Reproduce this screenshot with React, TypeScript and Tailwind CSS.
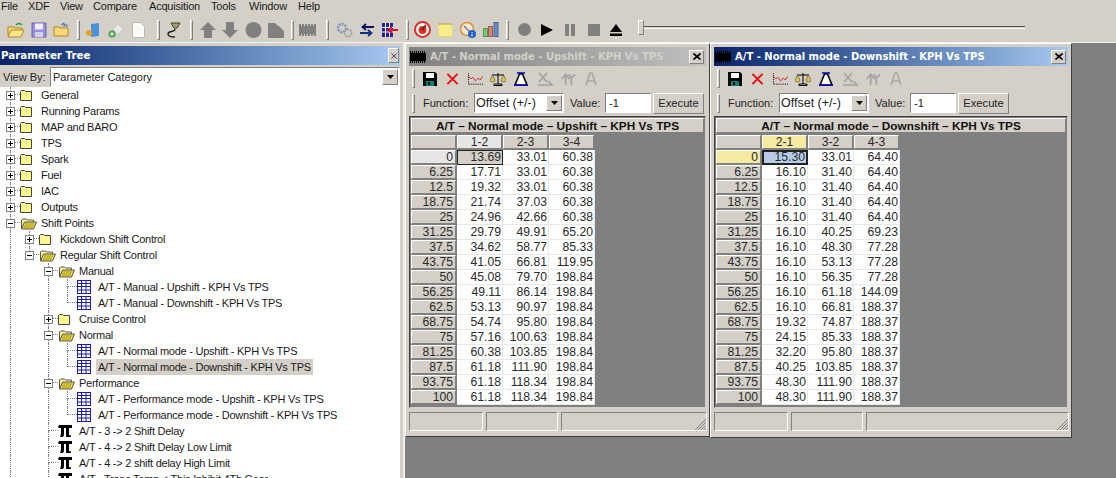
const UI = "font-['Liberation_Sans',sans-serif] text-[11px]";
const RAISED = 'border border-t-white border-l-white border-r-[#808080] border-b-[#808080]';
const SUNKEN = 'border border-t-[#808080] border-l-[#808080] border-r-white border-b-white';

type TreeItem = {
  label: string;
  guides: boolean[];
  icon: 'closed' | 'open' | 'table' | 'pi';
  box?: 'plus' | 'minus';
  last?: boolean;
  selected?: boolean;
};

const top = (label: string): TreeItem => ({ label, guides: [], icon: 'closed', box: 'plus' });

const treeItems: TreeItem[] = [
  top('General'),
  top('Running Params'),
  top('MAP and BARO'),
  top('TPS'),
  top('Spark'),
  top('Fuel'),
  top('IAC'),
  top('Outputs'),
  { label: 'Shift Points', guides: [], icon: 'open', box: 'minus' },
  { label: 'Kickdown Shift Control', guides: [true], icon: 'closed', box: 'plus' },
  { label: 'Regular Shift Control', guides: [true], icon: 'open', box: 'minus', last: true },
  { label: 'Manual', guides: [true, false], icon: 'open', box: 'minus' },
  { label: 'A/T - Manual - Upshift - KPH Vs TPS', guides: [true, false, true], icon: 'table' },
  { label: 'A/T - Manual - Downshift - KPH Vs TPS', guides: [true, false, true], icon: 'table', last: true },
  { label: 'Cruise Control', guides: [true, false], icon: 'closed', box: 'plus' },
  { label: 'Normal', guides: [true, false], icon: 'open', box: 'minus' },
  { label: 'A/T - Normal mode - Upshift - KPH Vs TPS', guides: [true, false, true], icon: 'table' },
  { label: 'A/T - Normal mode - Downshift - KPH Vs TPS', guides: [true, false, true], icon: 'table', last: true, selected: true },
  { label: 'Performance', guides: [true, false], icon: 'open', box: 'minus' },
  { label: 'A/T - Performance mode - Upshift - KPH Vs TPS', guides: [true, false, true], icon: 'table' },
  { label: 'A/T - Performance mode - Downshift - KPH Vs TPS', guides: [true, false, true], icon: 'table', last: true },
  { label: 'A/T - 3 -> 2 Shift Delay', guides: [true, false], icon: 'pi' },
  { label: 'A/T - 4 -> 2 Shift Delay Low Limit', guides: [true, false], icon: 'pi' },
  { label: 'A/T - 4 -> 2 shift delay High Limit', guides: [true, false], icon: 'pi' },
  { label: 'A/T - Trans Temp < This Inhibit 4Th Gear', guides: [true, false], icon: 'pi' },
];

const labels = ['0', '6.25', '12.5', '18.75', '25', '31.25', '37.5', '43.75', '50', '56.25', '62.5', '68.75', '75', '81.25', '87.5', '93.75', '100'];

const upshift = {
  title: 'A/T - Normal mode - Upshift - KPH Vs TPS',
  heading: 'A/T – Normal mode – Upshift – KPH Vs TPS',
  cols: ['1-2', '2-3', '3-4'],
  rows: [
    ['13.69', '33.01', '60.38'], ['17.71', '33.01', '60.38'], ['19.32', '33.01', '60.38'], ['21.74', '37.03', '60.38'],
    ['24.96', '42.66', '60.38'], ['29.79', '49.91', '65.20'], ['34.62', '58.77', '85.33'], ['41.05', '66.81', '119.95'],
    ['45.08', '79.70', '198.84'], ['49.11', '86.14', '198.84'], ['53.13', '90.97', '198.84'], ['54.74', '95.80', '198.84'],
    ['57.16', '100.63', '198.84'], ['60.38', '103.85', '198.84'], ['61.18', '111.90', '198.84'], ['61.18', '118.34', '198.84'],
    ['61.18', '118.34', '198.84'],
  ],
};

const downshift = {
  title: 'A/T - Normal mode - Downshift - KPH Vs TPS',
  heading: 'A/T – Normal mode – Downshift – KPH Vs TPS',
  cols: ['2-1', '3-2', '4-3'],
  rows: [
    ['15.30', '33.01', '64.40'], ['16.10', '31.40', '64.40'], ['16.10', '31.40', '64.40'], ['16.10', '31.40', '64.40'],
    ['16.10', '31.40', '64.40'], ['16.10', '40.25', '69.23'], ['16.10', '48.30', '77.28'], ['16.10', '53.13', '77.28'],
    ['16.10', '56.35', '77.28'], ['16.10', '61.18', '144.09'], ['16.10', '66.81', '188.37'], ['19.32', '74.87', '188.37'],
    ['24.15', '85.33', '188.37'], ['32.20', '95.80', '188.37'], ['40.25', '103.85', '188.37'], ['48.30', '111.90', '188.37'],
    ['48.30', '111.90', '188.37'],
  ],
};

function Folder({ open }: { open: boolean }) {
  if (open) {
    return (
      <svg viewBox="0 0 18 13" className="w-[18px] h-[13px]">
        <path d="M1.500 12V3l1-1h4l1 1h6v2" fill="#fbf59b" stroke="#555" />
        <path d="M1.500 12l3-7h12l-3 7z" fill="#e8d84a" stroke="#555" />
        <path d="M5 7h9M4 9h9M3.500 11h9" stroke="#a89a20" />
      </svg>
    );
  }
  return (
    <svg viewBox="0 0 12 11" className="w-[12px] h-[11px]">
      <path d="M.5 10.500V1.500l1-1h3l1 1h6v9z" fill="#fbf68f" stroke="#444" />
    </svg>
  );
}

function TableIcon() {
  return (
    <svg viewBox="0 0 14 14" className="w-[14px] h-[14px]">
      <rect x="0.500" y="0.500" width="13" height="13" fill="#fff" stroke="#1c1ca8" />
      <path d="M.5 3.500h13M.5 6.500h13M.5 10h13M4.500 .5v13M9 .5v13" stroke="#1c1ca8" />
    </svg>
  );
}

function PiIcon() {
  return (
    <svg viewBox="0 0 14 14" className="w-[14px] h-[14px]">
      <path d="M0 3l1-2h13v3h-3v7l2 .5V13H8V4H6v7l-1 2H2l1-3V4H1z" fill="#000" />
    </svg>
  );
}

function TreeRow({ item }: { item: TreeItem }) {
  return (
    <div className="flex h-[16px] items-center pl-[1px]">
      {item.guides.map((on, i) => (
        <div key={i} className="w-[19px] h-full shrink-0">
          {on && <div className="ml-[9px] h-full border-l border-dotted border-[#808080]" />}
        </div>
      ))}
      <div className="relative w-[19px] h-full shrink-0">
        <div className="ml-[9px] w-[10px] h-[8px] border-l border-b border-dotted border-[#808080]" />
        {!item.last && <div className="ml-[9px] h-[8px] border-l border-dotted border-[#808080]" />}
        {item.box && (
          <div className="absolute left-[5px] top-[4px] w-[9px] h-[9px] border border-[#808080] bg-white flex items-center justify-center">
            <div className="w-[5px] h-px bg-black" />
            {item.box === 'plus' && <div className="absolute w-px h-[5px] bg-black" />}
          </div>
        )}
      </div>
      <div className="w-[20px] shrink-0 flex items-center justify-start">
        {item.icon === 'closed' && <Folder open={false} />}
        {item.icon === 'open' && <Folder open />}
        {item.icon === 'table' && <TableIcon />}
        {item.icon === 'pi' && <PiIcon />}
      </div>
      <span className={`whitespace-nowrap -ml-[1px] px-[2px] leading-[16px] tracking-[-0.25px] text-[#1a1a1a] ${item.selected ? 'bg-[#d4d0c8]' : ''}`}>
        {item.label}
      </span>
    </div>
  );
}

function ComboArrow() {
  return (
    <div className={`w-[16px] h-[16px] bg-[#d4d0c8] flex items-center justify-center ${RAISED}`}>
      <svg viewBox="0 0 7 4" className="w-[7px] h-[4px]">
        <path d="M0 0h7L3.500 4z" fill="#000" />
      </svg>
    </div>
  );
}

function Grip() {
  return <div className={`w-[3px] h-[19px] ${RAISED}`} />;
}

// little icon strip shared by both table windows
function WindowTools() {
  return (
    <div className="flex items-center h-[25px] pl-[3px]">
      <Grip />
      <svg viewBox="0 0 14 14" className="w-[14px] h-[14px] ml-[8px]">
        <path d="M0 0h12l2 2v12H0z" fill="#000" />
        <rect x="3" y="1" width="8" height="5" fill="#fff" />
        <rect x="3" y="9" width="8" height="5" fill="#00807f" />
        <rect x="5" y="10" width="2" height="3" fill="#000" />
      </svg>
      <svg viewBox="0 0 14 14" className="w-[13px] h-[14px] ml-[9px]">
        <path d="M1.500 1.500l11 11M12.500 1.500l-11 11" stroke="#e81010" strokeWidth="2.200" />
      </svg>
      <svg viewBox="0 0 16 12" className="w-[15px] h-[12px] ml-[9px]">
        <path d="M0 3l3 3 2-2 3 4 3-3 2 2 3-4" fill="none" stroke="#d01818" />
        <path d="M.5 0v11.500H16" fill="none" stroke="#000" strokeDasharray="1 1" />
      </svg>
      <svg viewBox="0 0 16 14" className="w-[16px] h-[14px] ml-[7px]">
        <path d="M8 1v11M2 3h12M4 12h8v1.500H4z" stroke="#000" fill="none" />
        <path d="M0 8l2.500-5L5 8a2.500 2 0 0 1-5 0zM11 8l2.500-5L16 8a2.500 2 0 0 1-5 0z" fill="#e0c840" stroke="#444" strokeWidth=".6" />
      </svg>
      <svg viewBox="0 0 14 14" className="w-[14px] h-[14px] ml-[8px]">
        <path d="M1 13L5.500 2h3L13 13z" fill="#fff" stroke="#000" strokeWidth="1.600" />
        <path d="M0 13.300h14M3 1h8" stroke="#0000c0" strokeWidth="1.500" />
      </svg>
      <svg viewBox="0 0 16 14" className="w-[16px] h-[14px] ml-[9px]">
        <path d="M2 1l8 9M10 1l-8 9M1 13h14l-4-4" fill="none" stroke="#a0a0a0" strokeWidth="1.600" />
      </svg>
      <svg viewBox="0 0 16 14" className="w-[15px] h-[14px] ml-[8px]">
        <path d="M5 13V3M1 7l4-5 4 5M11 13V6M8 2l3 4 4-4" fill="none" stroke="#a0a0a0" strokeWidth="1.800" />
      </svg>
      <svg viewBox="0 0 12 14" className="w-[12px] h-[14px] ml-[9px]">
        <path d="M1 13L5 1h2l4 12M3 9h6" fill="none" stroke="#a8a8a8" strokeWidth="1.700" />
      </svg>
    </div>
  );
}

function FunctionRow() {
  return (
    <div className="flex items-center h-[24px] pl-[3px]">
      <Grip />
      <span className="ml-[8px] whitespace-nowrap w-[51px]">Function:</span>
      <div className={`w-[90px] h-[20px] bg-white flex items-center justify-between pl-[1px] pr-[1px] ${SUNKEN}`}>
        <span className="whitespace-nowrap leading-none text-[12.500px]">Offset (+/-)</span>
        <ComboArrow />
      </div>
      <span className="ml-[6px] w-[35px]">Value:</span>
      <div className={`w-[46px] h-[20px] bg-white flex items-center pl-[3px] ${SUNKEN}`}>-1</div>
      <div className={`ml-[2px] w-[51px] h-[21px] flex items-center justify-center text-[11.200px] ${RAISED}`}>Execute</div>
    </div>
  );
}

function StatusBar({ widths }: { widths: string[] }) {
  return (
    <div className="flex gap-[3px] h-[19px] mt-[4px] mr-[-1px]">
      {widths.map((w, i) => (
        <div key={i} className={`${w} ${SUNKEN} relative`}>
          {i === widths.length - 1 && (
            <svg viewBox="0 0 12 12" className="absolute right-0 bottom-0 w-[12px] h-[12px]">
              <path d="M12 1L1 12M12 4L4 12M12 7L7 12M12 10l-2 2" stroke="#808080" />
            </svg>
          )}
        </div>
      ))}
    </div>
  );
}

function DataTable({ data, active }: { data: typeof upshift; active: boolean }) {
  return (
    <div className="bg-[#808080] h-[292px] mt-[1px] border border-t-[#404040] border-l-[#404040] border-r-[#d4d0c8] border-b-[#d4d0c8] font-['Liberation_Sans',sans-serif]">
      <div className={`h-[15px] mx-px mt-px bg-[#d4d0c8] text-center font-bold text-[11.800px] leading-[15px] text-[#111] ${RAISED}`}>
        {data.heading}
      </div>
      <div className="grid grid-cols-[46px_46px_46px_46px] auto-rows-[15px] text-[12.200px] leading-[14px] text-[#2a2a2a] mt-[2px] w-fit ml-px">
        <div className={`h-[14px] w-[45px] bg-[#d4d0c8] ${RAISED}`} />
        {data.cols.map((c, i) => (
          <div
            key={c}
            className={`h-[14px] w-[45px] text-center leading-[12px] ${RAISED} ${
              i === 0 ? (active ? 'bg-[#f6e9a2]' : 'bg-[#e6e6e6]') : 'bg-[#d4d0c8]'
            }`}
          >
            {c}
          </div>
        ))}
        {labels.map((label, r) => [
          <div
            key={label}
            className={`h-[14px] w-[45px] text-right pr-[2px] leading-[13px] ${RAISED} ${
              r === 0 ? (active ? 'bg-[#f6e9a2]' : 'bg-[#e6e6e6]') : 'bg-[#d4d0c8]'
            }`}
          >
            {label}
          </div>,
          ...data.rows[r].map((v, c) => {
            const selected = r === 0 && c === 0;
            return (
              <div
                key={`${label}-${c}`}
                className={`h-[15px] text-right pr-[1px] ${
                  selected
                    ? `w-[46px] border-[#222] ${active ? 'border-[2px] leading-[11px] bg-[#b8cce8]' : 'border leading-[13px] bg-[#d4d0c8]'}`
                    : 'w-[46px] bg-white border-r border-b border-[#e8e8e8]'
                }`}
              >
                {v}
              </div>
            );
          }),
        ])}
      </div>
    </div>
  );
}

function TableWindow({ data, active, className, statusWidths }: { data: typeof upshift; active: boolean; className: string; statusWidths: string[] }) {
  return (
    <div className={`absolute bg-[#d4d0c8] p-[3px] border-[1px] border-t-white border-l-white border-r-[#404040] border-b-[#404040] ${className}`}>
      <div
        className={`h-[19px] flex items-center pl-[1px] pr-[2px] ${
          active ? 'bg-gradient-to-r from-[#0a246a] to-[#a6caf0]' : 'bg-gradient-to-r from-[#808080] to-[#c0c0c0]'
        }`}
      >
        <svg viewBox="0 0 16 12" className="w-[16px] h-[12px] shrink-0">
          <path d="M0 2h16v8H0z" fill="#000" />
          <path d="M0 1h16M0 11h16" stroke="#000" strokeWidth="2" strokeDasharray="1 1" />
        </svg>
        <span className={`ml-[4px] whitespace-nowrap font-['DejaVu_Sans',sans-serif] font-bold text-[10px] ${active ? 'text-white' : 'text-[#d4d0c8]'}`}>
          {data.title}
        </span>
        <div className={`ml-auto w-[15px] h-[14px] bg-[#d4d0c8] flex items-center justify-center ${RAISED}`}>
          <svg viewBox="0 0 8 7" className="w-[8px] h-[7px]">
            <path d="M.5 .5l7 6M7.500 .5l-7 6" stroke="#000" strokeWidth="1.700" />
          </svg>
        </div>
      </div>
      <WindowTools />
      <FunctionRow />
      <DataTable data={data} active={active} />
      <StatusBar widths={statusWidths} />
    </div>
  );
}

function TbGrip({ className }: { className: string }) {
  return <div className={`w-[3px] h-[20px] ${RAISED} ${className}`} />;
}

function MainToolbar() {
  return (
    <div className="flex items-center h-[29px] pt-[4px]">
      <svg viewBox="0 0 18 16" className="w-[18px] h-[16px] ml-[7px]">
        <path d="M1 14V5h6l1 1h7v2" fill="#f8d878" stroke="#b08820" />
        <path d="M1 15l3-7h13l-3 7z" fill="#fbe48c" stroke="#b08820" />
        <path d="M9 3c2-2 4-2 6 0" fill="none" stroke="#20a020" strokeWidth="1.500" />
      </svg>
      <svg viewBox="0 0 16 16" className="w-[16px] h-[16px] ml-[6px]">
        <path d="M1 1h14v14H1z" fill="#9a8ed8" stroke="#6a60a8" />
        <rect x="4" y="1.500" width="8" height="6" fill="#eeeef8" />
        <rect x="4" y="10" width="8" height="5" fill="#d0d0e8" />
      </svg>
      <svg viewBox="0 0 16 15" className="w-[16px] h-[15px] ml-[6px]">
        <path d="M1 14V5h5l1 1h8v8z" fill="#f8d878" stroke="#b08820" />
        <path d="M8 3l3-2v4M11 3h3v2" fill="none" stroke="#4060a0" />
      </svg>
      <TbGrip className="ml-[8px]" />
      <svg viewBox="0 0 15 16" className="w-[15px] h-[16px] ml-[5px]">
        <path d="M6 2l8-1v13l-8 1z" fill="#4a90d8" />
        <circle cx="4" cy="11" r="3" fill="#e8a020" />
      </svg>
      <svg viewBox="0 0 15 16" className="w-[15px] h-[16px] ml-[8px]">
        <path d="M5 7l5-5 5 5-5 6z" fill="#e8e8e8" stroke="#c8c8c8" />
        <circle cx="4" cy="12" r="3.500" fill="#48a048" />
        <path d="M2 12h4M4 10v4" stroke="#fff" />
      </svg>
      <svg viewBox="0 0 13 16" className="w-[13px] h-[16px] ml-[9px]">
        <path d="M.5 .5h8l4 4v11H.5z" fill="#fafaf6" stroke="#b8b8b0" />
      </svg>
      <TbGrip className="ml-[12px]" />
      <svg viewBox="0 0 17 16" className="w-[17px] h-[16px] ml-[6px]">
        <path d="M5 1h9l-3 5H8z" fill="#a8a070" stroke="#404020" />
        <path d="M9 7c0 4-7 1-7 5 0 2 2 3 7 3" fill="none" stroke="#202020" strokeWidth="1.400" />
      </svg>
      <TbGrip className="ml-[7px]" />
      <svg viewBox="0 0 16 16" className="w-[16px] h-[16px] ml-[7px]">
        <path d="M8 0l8 8h-4v8H4V8H0z" fill="#808080" />
      </svg>
      <svg viewBox="0 0 16 16" className="w-[16px] h-[16px] ml-[6px]">
        <path d="M8 16l8-8h-4V0H4v8H0z" fill="#808080" />
      </svg>
      <svg viewBox="0 0 17 16" className="w-[17px] h-[16px] ml-[7px]">
        <circle cx="8.500" cy="8" r="8" fill="#808080" />
      </svg>
      <svg viewBox="0 0 16 16" className="w-[16px] h-[16px] ml-[6px]">
        <path d="M0 1h7l3 3h-3v12H0zM7 4h4l5 5v7H7z" fill="#808080" />
      </svg>
      <TbGrip className="ml-[7px]" />
      <svg viewBox="0 0 17 12" className="w-[17px] h-[12px] ml-[5px]">
        <path d="M0 2h17v8H0z" fill="#808080" />
        <path d="M0 1h17M0 11h17" stroke="#808080" strokeWidth="2" strokeDasharray="2 1" />
      </svg>
      <TbGrip className="ml-[10px]" />
      <svg viewBox="0 0 17 16" className="w-[17px] h-[16px] ml-[7px]">
        <circle cx="6" cy="6" r="4" fill="none" stroke="#8098b8" strokeWidth="2.500" strokeDasharray="2 1" />
        <circle cx="12" cy="11" r="3.500" fill="none" stroke="#a0a0a0" strokeWidth="2" strokeDasharray="2 1" />
      </svg>
      <svg viewBox="0 0 14 14" className="w-[14px] h-[14px] ml-[7px]">
        <path d="M14 4H3M6 1L2.500 4 6 7" fill="none" stroke="#101060" strokeWidth="1.800" />
        <path d="M0 10h11M8 7l3.500 3L8 13" fill="none" stroke="#103080" strokeWidth="1.800" />
      </svg>
      <svg viewBox="0 0 16 14" className="w-[16px] h-[14px] ml-[8px]">
        <path d="M0 0h11v14H0z" fill="#2020a0" />
        <path d="M0 4.500h11M0 9h11M3.500 0v14M7.500 0v14" stroke="#fff" />
        <path d="M16 6H10V3L5 7l5 4V8h6z" fill="#e01020" />
      </svg>
      <TbGrip className="ml-[8px]" />
      <svg viewBox="0 0 17 17" className="w-[17px] h-[17px] ml-[5px]">
        <circle cx="8.500" cy="8.500" r="7.500" fill="#fff" stroke="#d83020" strokeWidth="2" />
        <circle cx="8.500" cy="9" r="4" fill="#d83020" />
        <path d="M8 9l4-5" stroke="#801010" strokeWidth="1.500" />
      </svg>
      <svg viewBox="0 0 15 14" className="w-[15px] h-[14px] ml-[7px]">
        <path d="M0 1h15v13H0z" fill="#f8ec88" stroke="#d8c860" />
        <path d="M1 1h13" stroke="#908840" strokeDasharray="1 1" />
      </svg>
      <svg viewBox="0 0 16 16" className="w-[16px] h-[16px] ml-[7px]">
        <circle cx="7" cy="7" r="6.500" fill="#f0e8d0" stroke="#e09030" strokeWidth="1.500" />
        <path d="M4 4l6 6" stroke="#808090" strokeWidth="1.500" />
        <circle cx="12" cy="12" r="4" fill="#2060d0" />
        <path d="M12 10v1M12 12v2.500" stroke="#fff" />
      </svg>
      <svg viewBox="0 0 16 15" className="w-[16px] h-[15px] ml-[7px]">
        <rect x="0.500" y="6.500" width="4" height="8" fill="#70d070" stroke="#609060" />
        <rect x="5.500" y="4.500" width="4" height="10" fill="#e08070" stroke="#906050" />
        <rect x="11" y="0.500" width="4" height="14" fill="#6090d0" stroke="#506090" />
      </svg>
      <TbGrip className="ml-[7px]" />
      <svg viewBox="0 0 13 13" className="w-[13px] h-[13px] ml-[9px]">
        <circle cx="6.500" cy="6.500" r="6.500" fill="#808080" />
      </svg>
      <svg viewBox="0 0 12 12" className="w-[12px] h-[12px] ml-[10px]">
        <path d="M0 0l12 6-12 6z" fill="#000" />
      </svg>
      <svg viewBox="0 0 10 12" className="w-[10px] h-[12px] ml-[12px]">
        <path d="M0 0h4v12H0zM6 0h4v12H6z" fill="#808080" />
      </svg>
      <div className="w-[12px] h-[12px] ml-[13px] bg-[#808080]" />
      <svg viewBox="0 0 12 12" className="w-[12px] h-[12px] ml-[10px]">
        <path d="M6 0l6 8H0zM0 9.500h12V12H0z" fill="#000" />
      </svg>
      <div className={`w-[6px] h-[15px] ml-[16px] -mt-[4px] bg-[#d4d0c8] ${RAISED}`} />
      <div className="w-[381px] h-[3px] -mt-[4px] border-t border-t-[#505050] border-b border-b-white" />
    </div>
  );
}

export default function App() {
  return (
    <div className={`h-[478px] w-[1116px] overflow-hidden bg-[#d4d0c8] flex flex-col text-[#222] ${UI}`}>
      <div className="flex h-[13px] items-center leading-none pl-[1px] tracking-[-0.2px] text-[#1a1a1a]">
        <span className="w-[27px]">File</span>
        <span className="w-[32px]">XDF</span>
        <span className="w-[33px]">View</span>
        <span className="w-[56px]">Compare</span>
        <span className="w-[62px]">Acquisition</span>
        <span className="w-[38px]">Tools</span>
        <span className="w-[49px]">Window</span>
        <span>Help</span>
      </div>
      <MainToolbar />
      <div className="flex flex-1 min-h-0 border-t border-t-[#f4f2ee]">
        {/* Parameter tree dock */}
        <div className="w-[403px] shrink-0 flex flex-col pr-[3px]">
          <div className="mt-[3px] h-[19px] flex items-center bg-gradient-to-r from-[#0a246a] to-[#a6caf0] pl-[1px] pr-[1px]">
            <span className="font-['DejaVu_Sans',sans-serif] font-bold text-[10.300px] text-white">Parameter Tree</span>
            <div className={`ml-auto w-[11px] h-[15px] bg-[#d4d0c8] flex items-center justify-center ${RAISED}`}>
              <svg viewBox="0 0 7 7" className="w-[6px] h-[6px]">
                <path d="M.5 .5l6 6M6.500 .5l-6 6" stroke="#333" />
              </svg>
            </div>
          </div>
          <div className="h-[22px] flex items-center pt-[2px]">
            <span className="w-[50px] pl-[3px] whitespace-nowrap">View By:</span>
            <div className={`flex-1 h-[20px] bg-white flex items-center justify-between pl-[2px] pr-[1px] ${SUNKEN}`}>
              <span>Parameter Category</span>
              <ComboArrow />
            </div>
          </div>
          <div className="flex-1 bg-white overflow-hidden">
            {treeItems.map((item) => (
              <TreeRow key={item.label} item={item} />
            ))}
          </div>
        </div>
        {/* MDI area with the two table windows on it */}
        <div className="relative flex-1 bg-[#808080] border-l-2 border-l-[#f0eee8]">
          <TableWindow
            data={upshift}
            active={false}
            className="left-0 top-0 w-[305px] h-[394px]"
            statusWidths={['w-[74px]', 'w-[72px]', 'flex-1']}
          />
          <TableWindow
            data={downshift}
            active
            className="left-[305px] top-0 w-[362px] h-[395px]"
            statusWidths={['w-[74px]', 'w-[72px]', 'flex-1']}
          />
        </div>
      </div>
    </div>
  );
}
